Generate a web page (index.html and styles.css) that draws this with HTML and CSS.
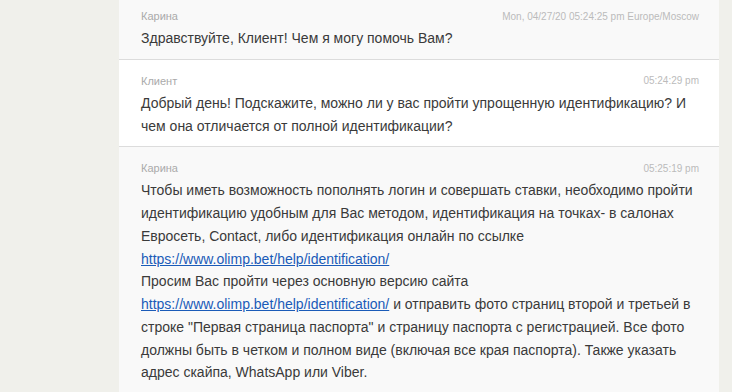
FILE: index.html
```html
<!DOCTYPE html>
<html lang="ru">
<head>
<meta charset="utf-8">
<link rel="stylesheet" href="styles.css">
</head>
<body>
<div class="page">
  <div class="panel">
    <div class="msg alt first">
      <div class="head"><span class="name">Карина</span><span class="time">Mon, 04/27/20 05:24:25 pm Europe/Moscow</span></div>
      <div class="text">Здравствуйте, Клиент! Чем я могу помочь Вам?</div>
    </div>
    <div class="msg">
      <div class="head"><span class="name">Клиент</span><span class="time">05:24:29 pm</span></div>
      <div class="text">Добрый день! Подскажите, можно ли у вас пройти упрощенную идентификацию? И чем она отличается от полной идентификации?</div>
    </div>
    <div class="msg alt">
      <div class="head"><span class="name">Карина</span><span class="time">05:25:19 pm</span></div>
      <div class="text">Чтобы иметь возможность пополнять логин и совершать ставки, необходимо пройти идентификацию удобным для Вас методом, идентификация на точках- в салонах Евросеть, Contact, либо идентификация онлайн по ссылке <br><a href="#">https://www.olimp.bet/help/identification/</a><br>Просим Вас пройти через основную версию сайта <br><a href="#">https://www.olimp.bet/help/identification/</a> и отправить фото страниц второй и третьей в строке "Первая страница паспорта" и страницу паспорта с регистрацией. Все фото должны быть в четком и полном виде (включая все края паспорта). Также указать адрес скайпа, WhatsApp или Viber.</div>
    </div>
  </div>
</div>
</body>
</html>
```

FILE: styles.css
```css
html, body {
  margin: 0;
  padding: 0;
  background: #f0f0eb;
  overflow: hidden;
}
.page {
  display: flex;
  padding-left: 119px;
  font-family: "Liberation Sans", Arial, sans-serif;
}
.panel {
  width: 600px;
  margin-top: -5px;
}
.msg {
  background: #ffffff;
  border-bottom: 1px solid #dcdcdc;
  padding: 12px 20px 9px 22px;
}
.msg.alt {
  background: #f9f9f9;
}
.head {
  display: flex;
  justify-content: space-between;
  align-items: center;
  height: 18px;
  margin-bottom: 2px;
}
.name {
  font-size: 11px;
  color: #aaaaaa;
}
.time {
  font-size: 10px;
  color: #bbbbbb;
}
.text {
  font-size: 14px;
  line-height: 22.75px;
  color: #3a3a3a;
}
.text a {
  color: #1a5bb8;
  text-decoration: underline;
}
```
